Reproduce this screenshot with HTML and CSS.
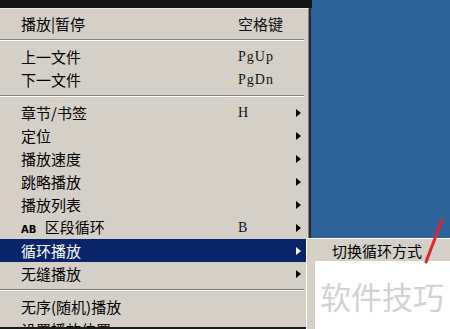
FILE: index.html
```html
<!DOCTYPE html>
<html lang="zh">
<head>
  <meta charset="UTF-8" />
  <title>播放菜单</title>
  <link rel="stylesheet" href="styles.css">
</head>
<body>
  <div class="screen">
    <div class="menu-col">
      <div class="top-strip"></div>
      <div class="menu">
        <div class="item"><span class="label">播放|暂停</span><span class="key cjk">空格键</span></div>
        <div class="sep"></div>
        <div class="item"><span class="label">上一文件</span><span class="key">PgUp</span></div>
        <div class="item"><span class="label">下一文件</span><span class="key">PgDn</span></div>
        <div class="sep"></div>
        <div class="item"><span class="label">章节/书签</span><span class="key">H</span><span class="arrow"></span></div>
        <div class="item"><span class="label">定位</span><span class="key"></span><span class="arrow"></span></div>
        <div class="item"><span class="label">播放速度</span><span class="key"></span><span class="arrow"></span></div>
        <div class="item"><span class="label">跳略播放</span><span class="key"></span><span class="arrow"></span></div>
        <div class="item"><span class="label">播放列表</span><span class="key"></span><span class="arrow"></span></div>
        <div class="item"><span class="label"><b class="ab">AB</b> 区段循环</span><span class="key">B</span><span class="arrow"></span></div>
        <div class="item active"><span class="label">循环播放</span><span class="key"></span><span class="arrow"></span></div>
        <div class="item"><span class="label">无缝播放</span><span class="key"></span><span class="arrow"></span></div>
        <div class="sep"></div>
        <div class="item"><span class="label">无序(随机)播放</span></div>
        <div class="item"><span class="label">设置播放位置</span></div>
      </div>
      <div class="bottom-strip"></div>
    </div>

    <div class="desktop">
      <div class="submenu">
        <div class="item"><span class="label">切换循环方式</span></div>
      </div>
      <div class="watermark">软件技巧</div>
      <svg class="pen" width="30" height="50" viewBox="0 0 30 50">
        <line x1="24" y1="2" x2="8" y2="44" stroke="#e0262a" stroke-width="3" stroke-linecap="round" />
      </svg>
    </div>
  </div>
</body>
</html>
```

FILE: styles.css
```css
body {
  margin: 0;
  padding: 0;
  background-color: #2e6399;
  font-family: "Noto Sans CJK SC", "Noto Sans", sans-serif;
  color: #000;
}
.screen {
  display: flex;
  width: 450px;
  height: 329px;
  overflow: hidden;
}
.menu-col {
  display: flex;
  flex-direction: column;
  width: 312px;
  height: 329px;
  flex-shrink: 0;
}
.top-strip {
  height: 8px;
  background-color: #161616;
  flex-shrink: 0;
}
.bottom-strip {
  height: 2px;
  background-color: #1b1b1b;
  flex-shrink: 0;
}
.menu {
  flex: 1;
  overflow: hidden;
  background-color: #d4d0c8;
  border-top: 1px solid #ece9e2;
  border-right: 1px solid #808080;
  box-shadow: 2px 0 0 #2a2a2a;
  margin-right: 3px;
  padding-top: 3px;
}
.item {
  display: flex;
  align-items: center;
  height: 23px;
  font-size: 15px;
  line-height: 23px;
  white-space: nowrap;
}
.item .label {
  padding-left: 21px;
  width: 217px;
}
.item .key {
  width: 56px;
  font-family: "Liberation Serif", serif;
  font-size: 14px;
  letter-spacing: 1px;
  color: #111;
}
.item .key.cjk {
  font-family: "Noto Sans CJK SC", sans-serif;
  font-size: 15px;
  letter-spacing: 0;
}
.ab {
  font-family: "DejaVu Sans", sans-serif;
  font-size: 10px;
  font-weight: bold;
  margin-right: 5px;
}
.arrow {
  width: 0;
  height: 0;
  margin-left: 2px;
  border-top: 4px solid transparent;
  border-bottom: 4px solid transparent;
  border-left: 5px solid #000;
}
.item.active {
  background-color: #0a246a;
  color: #fff;
}
.item.active .arrow {
  border-left-color: #fff;
}
.sep {
  height: 10px;
  display: flex;
  flex-direction: column;
  justify-content: center;
}
.sep::before {
  content: "";
  display: block;
  margin: 0 4px 0 0;
  border-top: 1px solid #808080;
  border-bottom: 1px solid #fff;
}
.desktop {
  position: relative;
  flex: 1;
}
.submenu {
  position: absolute;
  left: -6px;
  top: 238px;
  width: 200px;
  height: 100px;
  background-color: #d4d0c8;
  border-top: 1px solid #fff;
  border-left: 1px solid #fff;
}
.submenu .item .label {
  padding-left: 25px;
  width: auto;
}
.watermark {
  position: absolute;
  left: 3px;
  top: 261px;
  width: 140px;
  height: 70px;
  background-color: #fff;
  color: #d2d2d2;
  font-size: 31px;
  line-height: 70px;
  padding-left: 5px;
}
.pen {
  position: absolute;
  left: 106px;
  top: 218px;
}
```
